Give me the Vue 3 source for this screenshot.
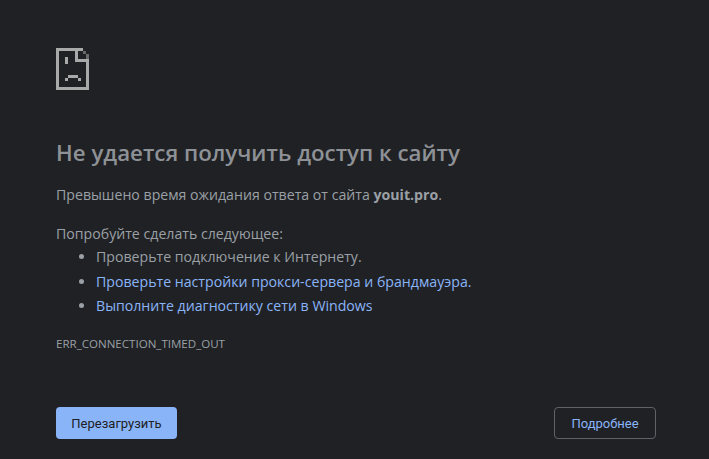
<script setup>
const tips = [
  { text: 'Проверьте подключение к Интернету.', link: false },
  { text: 'Проверьте настройки прокси-сервера и брандмауэра.', link: true },
  { text: 'Выполните диагностику сети в Windows', link: true },
]
</script>

<template>
  <div class="page">
    <svg class="icon" width="33" height="42" viewBox="0 0 33 42" shape-rendering="crispEdges">
      <path fill="#a9a9a9" d="M0 0h27v3H3v36h27V14h3v28H0z" />
      <path fill="#a9a9a9" d="M19 3h3v8h11v3H19z" />
      <path fill="#a9a9a9" d="M9 9h3v7H9zM9 30h3v3H9zM12 27h10v3H12zM22 30h3v3h-3z" />
      <path fill="#6a6a6a" d="M27 3h3v3h-3zM30 6h3v5h-3z" />
    </svg>

    <h1 class="title">Не удается получить доступ к сайту</h1>
    <p class="summary">Превышено время ожидания ответа от сайта <strong>youit.pro</strong>.</p>

    <p class="try">Попробуйте сделать следующее:</p>
    <ul class="tips">
      <li v-for="tip in tips" :key="tip.text">
        <a v-if="tip.link" class="link">{{ tip.text }}</a>
        <template v-else>{{ tip.text }}</template>
      </li>
    </ul>

    <div class="code">ERR_CONNECTION_TIMED_OUT</div>

    <div class="buttons">
      <button class="btn primary">Перезагрузить</button>
      <button class="btn details">Подробнее</button>
    </div>
  </div>
</template>

<style>
body {
  margin: 0;
  background: #202124;
}
</style>

<style scoped>
.page {
  box-sizing: border-box;
  width: 709px;
  height: 459px;
  padding: 48px 53px 0 56px;
  background: #202124;
  color: #9aa0a6;
  font-family: "Open Sans", "Noto Sans", sans-serif;
  font-size: 14.15px;
  display: flex;
  flex-direction: column;
  overflow: hidden;
}
.icon {
  display: block;
  flex: none;
}
.title {
  margin: 47px 0 0;
  font-size: 22.3px;
  line-height: 32px;
  font-weight: 600;
  color: #8e9297;
}
.summary {
  margin: 15px 0 0;
  line-height: 22px;
}
.summary strong {
  font-weight: 700;
}
.try {
  margin: 17px 0 0;
  line-height: 22px;
}
.tips {
  margin: 0;
  padding: 0 0 0 40px;
  line-height: 24px;
}
.tips li {
  height: 24.5px;
}
.link {
  color: #8ab4f8;
}
.code {
  margin-top: 17px;
  font-size: 11.55px;
  line-height: 16px;
}
.buttons {
  margin-top: auto;
  margin-bottom: 20px;
  display: flex;
  justify-content: space-between;
}
.btn {
  height: 32px;
  border-radius: 4px;
  font-family: Roboto, sans-serif;
  font-size: 13px;
  padding: 0;
}
.primary {
  width: 121px;
  border: 0;
  background: #8ab4f8;
  color: #202124;
}
.details {
  width: 102px;
  border: 1px solid #5f6368;
  background: transparent;
  color: #8ab4f8;
}
</style>
